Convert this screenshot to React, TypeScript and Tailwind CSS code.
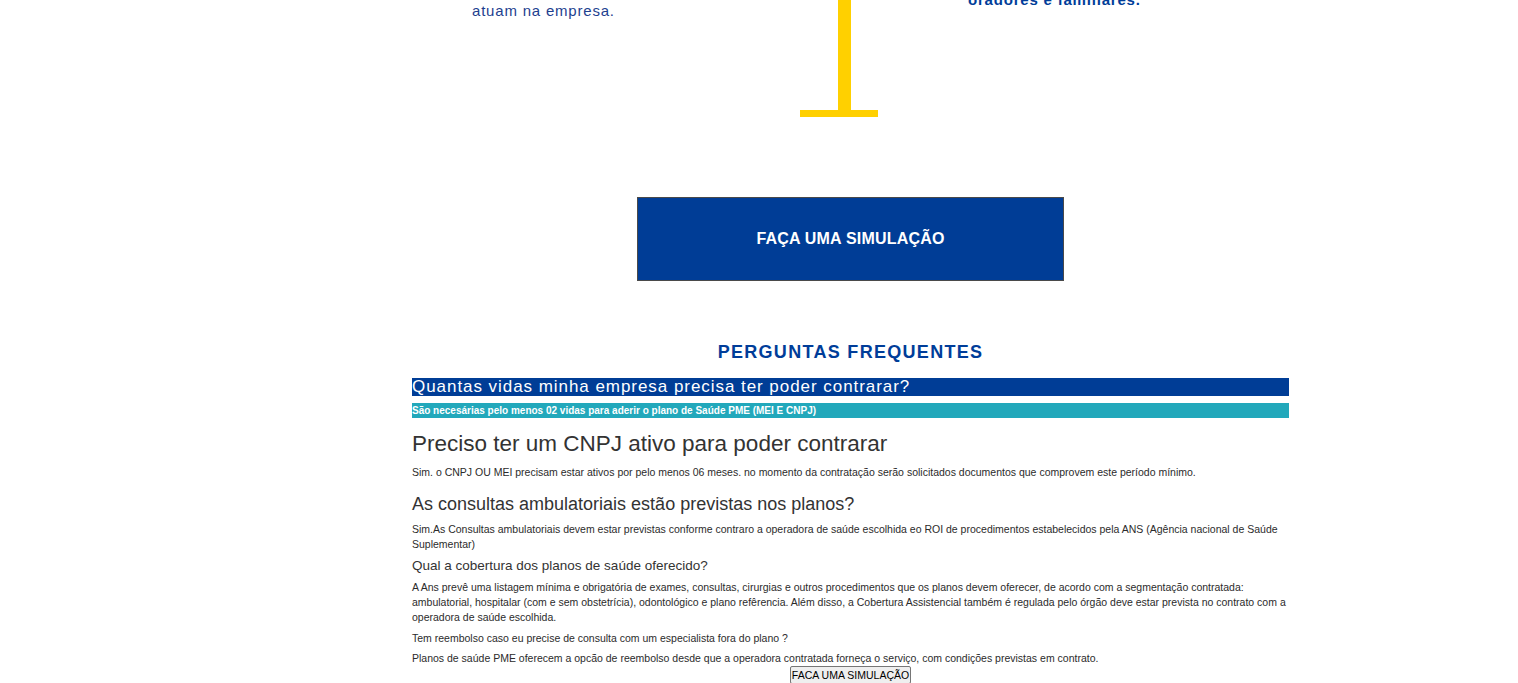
export default function App() {
  return (
    <div className="w-full min-h-screen bg-white font-['Liberation_Sans',Arial,sans-serif] text-[#333]">
      {/* top of the "como funciona" block, scrolled partly out of view */}
      <div className="flex items-start pl-[472px]">
        <div className="w-[328px] pt-[1px]">
          <p className="text-[15px] leading-[20px] tracking-[0.8px] text-[#1e3f8f]">atuam na empresa.</p>
        </div>
        <div className="w-[78px] flex flex-col items-start">
          <div className="ml-[38px] w-[13px] h-[110px] bg-[#ffd000]"></div>
          <div className="w-[78px] h-[7px] bg-[#ffd000]"></div>
        </div>
        <div className="ml-[90px] -mt-[10px]">
          <p className="text-[15px] leading-[20px] font-bold tracking-[0.8px] text-[#003d99]">oradores e familiares.</p>
        </div>
      </div>

      <div className="pl-[412px]">
        <div className="w-[877px]">
          <div className="flex justify-center mt-[80px]">
            <button className="w-[427px] h-[84px] bg-[#003d96] border border-[#4a4a4a] text-white font-bold text-[16px] tracking-[0.2px]">
              FAÇA UMA SIMULAÇÃO
            </button>
          </div>

          <h2 className="mt-[59px] text-center text-[18px] leading-[24px] font-bold tracking-[1.3px] text-[#003d99]">
            PERGUNTAS FREQUENTES
          </h2>

          <div className="mt-[14px] h-[18px] bg-[#003d96] text-white text-[17px] leading-[18px] tracking-[0.95px]">
            Quantas vidas minha empresa precisa ter poder contrarar?
          </div>
          <div className="mt-[7px] h-[15px] bg-[#22a8bb] text-white text-[10px] leading-[15px] font-bold">
            São necesárias pelo menos 02 vidas para aderir o plano de Saúde PME (MEI E CNPJ)
          </div>

          <h3 className="mt-[12px] text-[22.5px] leading-[28px] text-[#333]">Preciso ter um CNPJ ativo para poder contrarar</h3>
          <p className="mt-[7px] text-[10.5px] leading-[15px] text-[#2b2b2b]">
            Sim. o CNPJ OU MEI precisam estar ativos por pelo menos 06 meses. no momento da contratação serão solicitados documentos que comprovem este período mínimo.
          </p>

          <h3 className="mt-[14px] text-[18px] leading-[21px] text-[#333]">As consultas ambulatoriais estão previstas nos planos?</h3>
          <p className="mt-[7px] text-[10.5px] leading-[15px] text-[#2b2b2b]">
            Sim.As Consultas ambulatoriais devem estar previstas conforme contraro a operadora de saúde escolhida eo ROI de procedimentos estabelecidos pela ANS (Agência nacional de Saúde Suplementar)
          </p>

          <h4 className="mt-[5px] text-[13.5px] leading-[18px] text-[#333]">Qual a cobertura dos planos de saúde oferecido?</h4>
          <p className="mt-[5px] text-[10.5px] leading-[15px] text-[#2b2b2b]">
            A Ans prevê uma listagem mínima e obrigatória de exames, consultas, cirurgias e outros procedimentos que os planos devem oferecer, de acordo com a segmentação contratada: ambulatorial, hospitalar (com e sem obstetrícia), odontológico e plano refêrencia. Além disso, a Cobertura Assistencial também é regulada pelo órgão deve estar prevista no contrato com a operadora de saúde escolhida.
          </p>
          <p className="mt-[6px] text-[10.5px] leading-[15px] text-[#2b2b2b]">
            Tem reembolso caso eu precise de consulta com um especialista fora do plano ?
          </p>
          <p className="mt-[5px] text-[10.5px] leading-[15px] text-[#2b2b2b]">
            Planos de saúde PME oferecem a opcão de reembolso desde que a operadora contratada forneça o serviço, com condições previstas em contrato.
          </p>
          <div className="flex justify-center">
            <button className="px-[1px] h-[18px] text-[10.5px] leading-[14px] text-black bg-[#efefef] border border-[#767676] rounded-[2px]">
              FACA UMA SIMULAÇÃO
            </button>
          </div>
        </div>
      </div>
    </div>
  );
}
